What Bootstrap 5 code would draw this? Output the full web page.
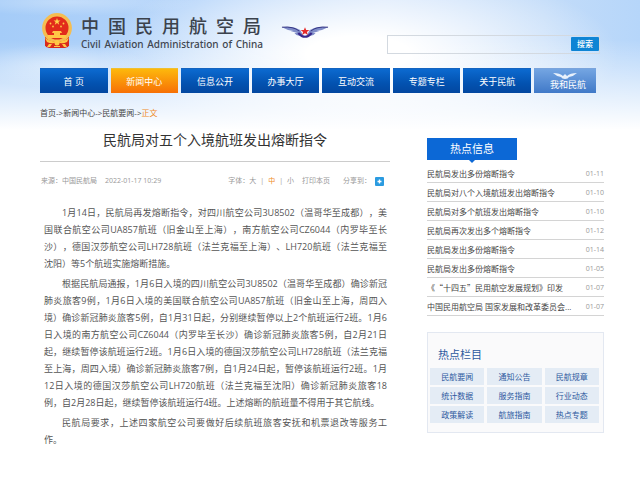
<!DOCTYPE html>
<html lang="zh-CN">
<head>
<meta charset="utf-8">
<meta name="viewport" content="width=device-width, initial-scale=1">
<title>民航局对五个入境航班发出熔断指令</title>
<link href="https://cdn.jsdelivr.net/npm/bootstrap@5.3.0/dist/css/bootstrap.min.css" rel="stylesheet">
<style>
body{font-family:"Open Sans","Noto Sans CJK SC",sans-serif;font-size:9px;line-height:17px;color:#555;text-spacing-trim:space-all;
background:
radial-gradient(ellipse 90px 22px at 60px 66px,rgba(255,255,255,.45),transparent),
radial-gradient(ellipse 130px 14px at 70px 2px,rgba(255,255,255,.3),transparent),
linear-gradient(180deg,transparent 40px,#fff 130px),
radial-gradient(ellipse 260px 90px at 56% 54px,#fff 20%,rgba(255,255,255,0) 100%),
linear-gradient(90deg,#a5ccf8 0%,#b4d4fa 30%,#cfe2fb 60%,#c3dcf9 85%,#b6d6fa 100%);
background-size:100% 131px;background-repeat:no-repeat;background-color:#fff}
a{text-decoration:none;color:inherit}
a:hover{color:#f08c28}
.page-wrap{padding:0 36px 0 40px}
.site-head{height:68px}
.emblem{width:34px;height:36px;margin-top:13px}
.brand-text{width:182px;margin:13px 18px 0 7px}
.site-name{font-family:"Noto Sans CJK SC",sans-serif;font-size:18px;line-height:24px;text-align-last:justify;font-weight:500;color:#3b424c;padding-right:2px}
.site-en{font-family:"Noto Sans","Open Sans",sans-serif;font-size:10px;line-height:14px;text-align-last:justify;font-weight:500;color:#3f4650}
.wing-logo{width:48px;height:16px;margin-top:24px}
.search-box{border:1px solid #d3d9e0;height:19px;width:213px;margin:35px 4px 0 0}
.search-box input{background:transparent;font-size:9px;min-width:0}
.search-btn{background:#0d84d4;color:#fff;border:0;border-radius:1px;font-size:8px;font-weight:500;line-height:14px;width:28px;height:14px;margin-top:1px}
.main-nav{padding-right:8px;gap:3px}
.main-nav a{position:relative;flex:1 1 0;height:25px;color:#fff;background:linear-gradient(#0c6ad0,#0352b0 60%,#0347a0);border-top:1px solid #1464c0}
.main-nav a.on{background:linear-gradient(#fdb80c,#f77006);border-color:#efc030}
.main-nav a.mine{background:linear-gradient(#74a5e2,#4079c8);border-color:#7aa4dc;flex:0 0 62px;padding:6px 0 0 6px}
.mine svg{position:absolute;left:18px;top:3px;width:26px;height:8px}
.crumbs{font-size:8px;line-height:12px;color:#444;padding-top:14px}
.orange,.meta-bar .orange{color:#f08c28}
.story{flex:0 1 350px}
.story h1{font-size:14px;line-height:20px;font-weight:400;color:#333;border-bottom:1px solid #ccc;padding:11px 0 11px;margin:0 0 12px}
.meta-bar{font-size:7px;line-height:14px;color:#999;padding:0 6px 0 1px}
.meta-bar button{border:0;background:none;padding:0;color:inherit}
.share-label{margin-left:13px}
.share-btn svg{width:9px;height:9px;display:block}
.prose{padding:16px 3px 0 4px}
.prose p{margin:0 0 3px}
.prose span{display:block;text-align:justify;text-align-last:justify;white-space:nowrap}
.prose .begin{padding-left:18px}
.prose .end{text-align-last:left}
.side-col{flex:0 1 177px;padding-top:19px}
.side-title{position:relative;width:90px;background:#0c68d6;color:#fff;font-size:11px;line-height:22px;font-weight:400}
.side-title::after{content:"";position:absolute;left:42px;top:22px;border:3px solid transparent;border-top-color:#0c68d6}
.news-list{padding-top:4px}
.news-list li{font-size:8px;line-height:17px;padding-top:1px;border-bottom:1px solid #d4d4d4;color:#444;white-space:nowrap}
.news-list time{font-size:7px;color:#999}
.cjk{font-family:"Noto Sans CJK SC",sans-serif}
.topics{border:1px solid #e3e8f1;background:#fafafb;margin-top:16px;padding:12px 4px 9px 2px;color:#2d599e}
.topics h2{font-size:11px;line-height:20px;font-weight:400;padding-left:8px;margin-bottom:3px}
.topic-grid{display:grid;grid-template-columns:repeat(3,1fr);gap:2px 3px}
.topic-grid a{background:#e4ecf5;font-size:8px;line-height:17px;text-align:center}
</style>
<script src="https://cdn.jsdelivr.net/npm/bootstrap@5.3.0/dist/js/bootstrap.bundle.min.js"></script>
</head>
<body>
<div class="page-wrap">
<header class="site-head d-flex align-items-start">
<svg class="emblem flex-shrink-0" viewBox="0 0 34 36"><path fill="#d82a1c" d="M5 24h24v9l-5 2H10l-5-2z"/><circle cx="17" cy="15" r="13.200" fill="#e22c1b" stroke="#f5bd50" stroke-width="3.400"/><path fill="#d82a1c" d="M5 26q12 5 24 0l-1 8-4 1H10l-4-1z"/><path fill="#ffd34c" d="m17 5 .9 2.500h2.600l-2.100 1.600.8 2.600-2.200-1.600-2.200 1.600.8-2.600-2.100-1.600h2.600z"/><g fill="#ffc845"><circle cx="10.500" cy="10.500" r=".9"/><circle cx="13" cy="13.500" r=".9"/><circle cx="21" cy="13.500" r=".9"/><circle cx="23.500" cy="10.500" r=".9"/><path d="M13 18h8l1 2h-2v2h6v3H8v-3h6v-2h-2z"/><path d="M5 25q5 4 10 3l2-1 2 1q5 1 10-3l-2 4q-4 2-7 1l-3-1-3 1q-3 1-7-1z"/><circle cx="17" cy="30" r="2.500"/><path d="m9 31-2 3h3l2-3zm16 0 2 3h-3l-2-3zM14 33h6v1h-6z"/></g></svg>
<div class="brand-text text-nowrap flex-shrink-0"><div class="site-name">中国民用航空局</div><div class="site-en">Civil Aviation Administration of China</div></div>
<svg class="wing-logo flex-shrink-0" viewBox="0 0 50 16"><path fill="#7f8cc8" d="M1 3q11-2 19 3l3 5-4 1q-3 0-5-3l3 0-7-2 3 0Q6 6 1 3zm48 0q-11-2-19 3l-3 5 4 1q3 0 5-3l-3 0 7-2-3 0q7-1 12-4z"/><path d="M1 3q12-1 18 4M49 3q-12-1-18 4" stroke="#353584" fill="none"/><path d="M18 9q7 8 14 0" stroke="#38288c" stroke-width="2.200" fill="none"/><path fill="#e52b2b" d="m25 3 1.200 3h3.300l-2.500 2 1 3-3-1.800L22 11l1-3-2.500-2h3.300z"/></svg>
<form class="search-box d-flex ms-auto"><input class="border-0 p-0 ps-1 flex-fill" type="text" aria-label="搜索"><button class="search-btn p-0" type="button">搜索</button></form>
</header>
<nav class="main-nav d-flex text-nowrap">
<a class="d-flex align-items-center justify-content-center" href="#">首 页</a>
<a class="on d-flex align-items-center justify-content-center" href="#">新闻中心</a>
<a class="d-flex align-items-center justify-content-center" href="#">信息公开</a>
<a class="d-flex align-items-center justify-content-center" href="#">办事大厅</a>
<a class="d-flex align-items-center justify-content-center" href="#">互动交流</a>
<a class="d-flex align-items-center justify-content-center" href="#">专题专栏</a>
<a class="d-flex align-items-center justify-content-center" href="#">关于民航</a>
<a class="mine d-flex align-items-center justify-content-center" href="#"><svg viewBox="0 0 26 8" aria-hidden="true"><path fill="#e8f1fc" d="M1 1q7 0 10 3l2-2 2 2q3-3 10-3-3 3-8 4-1 2-4 2t-4-2Q4 4 1 1z"/></svg>我和民航</a>
</nav>
<div class="crumbs"><a href="#">首页</a>-&gt;<a href="#">新闻中心</a>-&gt;<a href="#">民航要闻</a>-&gt;<span class="orange">正文</span></div>
<div class="d-flex justify-content-between gap-3">
<main class="story">
<h1 class="text-center">民航局对五个入境航班发出熔断指令</h1>
<div class="meta-bar d-flex align-items-center text-nowrap">
<span>来源：中国民航局</span><span class="ms-2">2022-01-17 10:29</span>
<span class="d-flex ms-auto gap-1"><span>字体：<button type="button">大</button></span>|<button class="orange" type="button">中</button>|<button type="button">小</button></span>
<button class="ms-2" type="button">打印本页</button>
<span class="share-label">分享到：</span>
<button class="share-btn ms-1" type="button" aria-label="分享"><svg viewBox="0 0 9 9"><rect width="9" height="9" rx="1" fill="#2b9be0"/><path d="M4.500 2.500v4M2.500 4.500h4" stroke="#fff" stroke-width="1.400"/></svg></button>
</div>
<article class="prose">
<p><span class="begin">1月14日，民航局再发熔断指令，对四川航空公司3U8502（温哥华至成都），美</span><span>国联合航空公司UA857航班（旧金山至上海），南方航空公司CZ6044（内罗毕至长</span><span>沙），德国汉莎航空公司LH728航班（法兰克福至上海）、LH720航班（法兰克福至</span><span class="end">沈阳）等5个航班实施熔断措施。</span></p>
<p><span class="begin">根据民航局通报，1月6日入境的四川航空公司3U8502（温哥华至成都）确诊新冠</span><span>肺炎旅客9例，1月6日入境的美国联合航空公司UA857航班（旧金山至上海，周四入</span><span>境）确诊新冠肺炎旅客5例，自1月31日起，分别继续暂停以上2个航班运行2班。1月6</span><span>日入境的南方航空公司CZ6044（内罗毕至长沙）确诊新冠肺炎旅客5例，自2月21日</span><span>起，继续暂停该航班运行2班。1月6日入境的德国汉莎航空公司LH728航班（法兰克福</span><span>至上海，周四入境）确诊新冠肺炎旅客7例，自1月24日起，暂停该航班运行2班。1月</span><span>12日入境的德国汉莎航空公司LH720航班（法兰克福至沈阳）确诊新冠肺炎旅客18</span><span class="end">例，自2月28日起，继续暂停该航班运行4班。上述熔断的航班量不得用于其它航线。</span></p>
<p><span class="begin">民航局要求，上述四家航空公司要做好后续航班旅客安抚和机票退改等服务工</span><span class="end">作。</span></p>
</article>
</main>
<aside class="side-col">
<h2 class="side-title text-center m-0">热点信息</h2>
<ul class="news-list list-unstyled m-0">
<li class="d-flex justify-content-between"><a href="#">民航局发出多份熔断指令</a><time>01-11</time></li>
<li class="d-flex justify-content-between"><a href="#">民航局对八个入境航班发出熔断指令</a><time>01-10</time></li>
<li class="d-flex justify-content-between"><a href="#">民航局对多个航班发出熔断指令</a><time>01-10</time></li>
<li class="d-flex justify-content-between"><a href="#">民航局再次发出多个熔断指令</a><time>01-12</time></li>
<li class="d-flex justify-content-between"><a href="#">民航局发出多份熔断指令</a><time>01-14</time></li>
<li class="d-flex justify-content-between"><a href="#">民航局发出多份熔断指令</a><time>01-05</time></li>
<li class="d-flex justify-content-between"><a class="cjk" href="#">《“十四五”民用航空发展规划》印发</a><time>01-07</time></li>
<li class="d-flex justify-content-between"><a href="#">中国民用航空局 国家发展和改革委员会...</a><time>01-07</time></li>
</ul>
<section class="topics">
<h2>热点栏目</h2>
<div class="topic-grid">
<a href="#">民航要闻</a><a href="#">通知公告</a><a href="#">民航规章</a>
<a href="#">统计数据</a><a href="#">服务指南</a><a href="#">行业动态</a>
<a href="#">政策解读</a><a href="#">航旅指南</a><a href="#">热点专题</a>
</div>
</section>
</aside>
</div>
</div>
</body>
</html>
